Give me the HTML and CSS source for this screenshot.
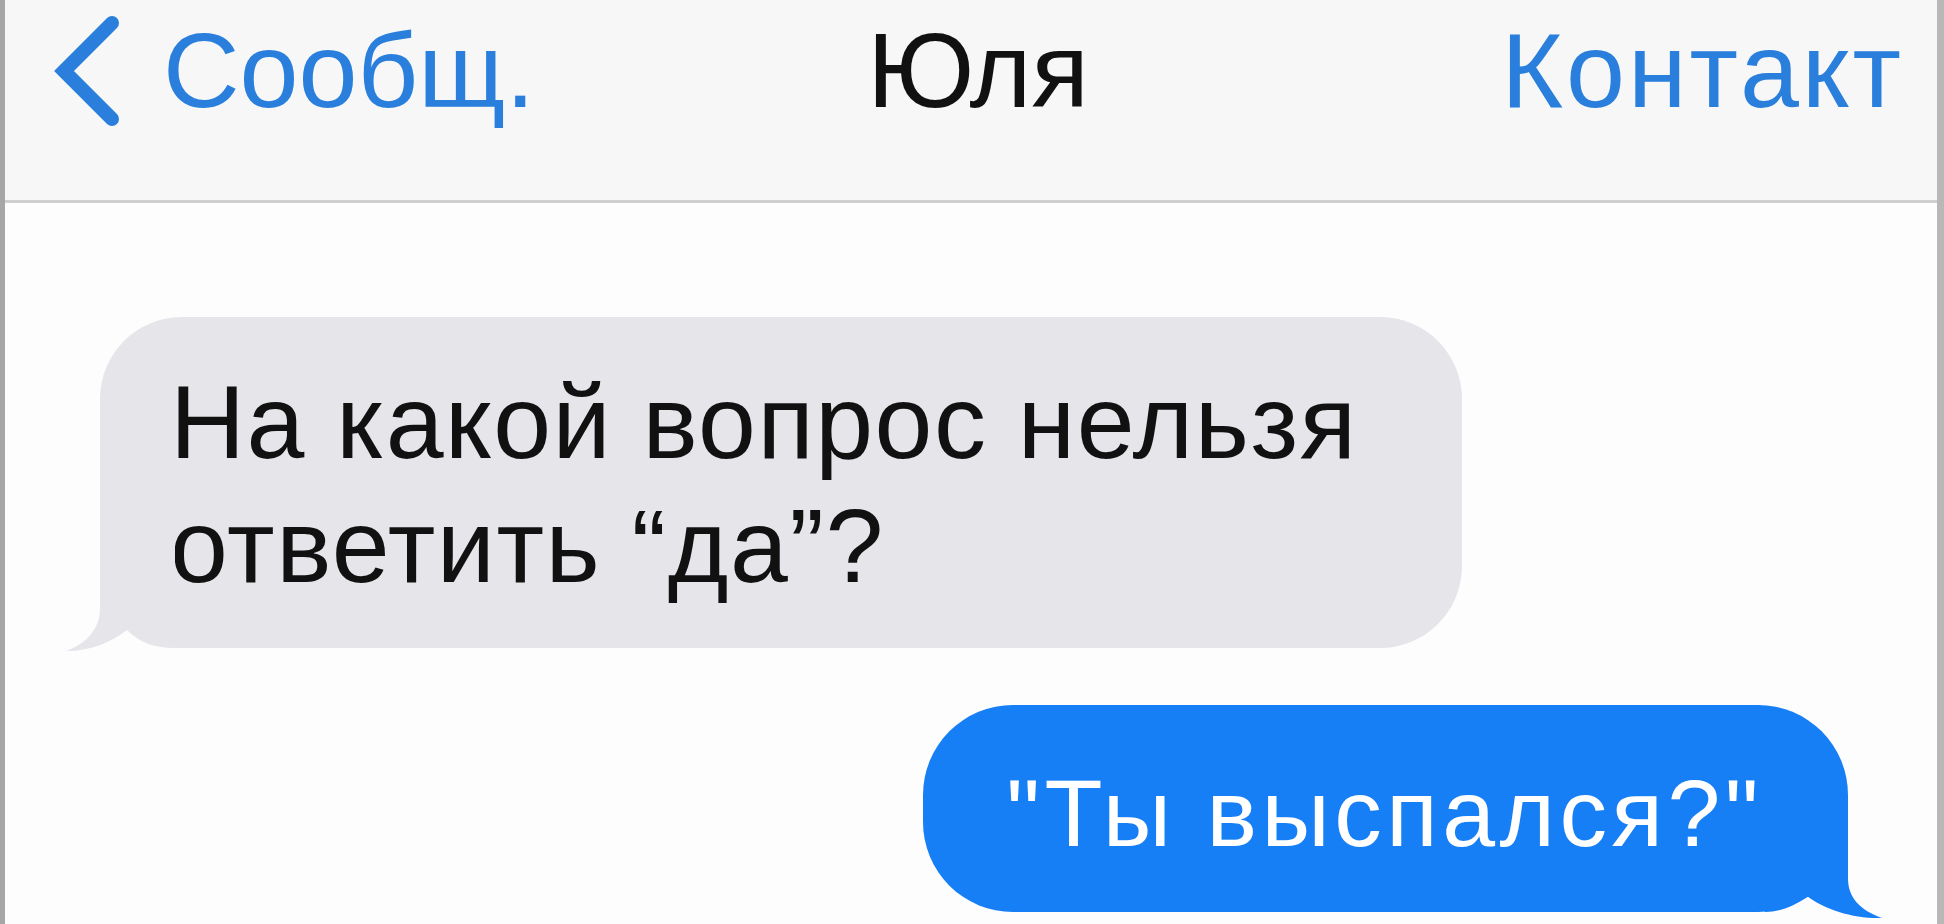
FILE: index.html
```html
<!DOCTYPE html>
<html lang="ru">
<head>
<meta charset="utf-8">
<title>Юля</title>
<link rel="stylesheet" href="styles.css">
</head>
<body>
<div class="screen">
  <header class="navbar">
    <div class="nav-left">
      <svg class="chevron" width="70" height="120" viewBox="0 0 70 120">
        <path d="M60 8 L12 56 L60 104" fill="none" stroke="currentColor" stroke-width="14" stroke-linecap="round" stroke-linejoin="miter"/>
      </svg>
      <span class="nav-back">Сообщ.</span>
    </div>
    <div class="nav-title">Юля</div>
    <div class="nav-right">Контакт</div>
  </header>
  <main class="thread">
    <div class="row row-in">
      <div class="bubble bubble-in">
        На какой вопрос нельзя<br>ответить “да”?
        <svg class="tail tail-in" width="120" height="160" viewBox="0 0 120 160">
          <path d="M40,5 L40,115 C40,135 28,150 6,158 C30,158 50,150 67,137 C80,150 95,155 115,155 L115,5 Z"/>
        </svg>
      </div>
    </div>
    <div class="row row-out">
      <div class="bubble bubble-out">
        "Ты выспался?"
        <svg class="tail tail-out" width="128" height="130" viewBox="0 0 128 130">
          <path d="M88,8 L88,88 C88,108 100,120 122,128 C95,129 65,120 47,106 C35,116 20,122 5,122 L5,8 Z"/>
        </svg>
      </div>
    </div>
  </main>
</div>
</body>
</html>
```
FILE: styles.css
```css
* { box-sizing: border-box; }
html, body { margin: 0; padding: 0; }
body {
  width: 1944px;
  height: 924px;
  overflow: hidden;
  background: #fdfdfd;
  font-family: "Liberation Sans", Arial, sans-serif;
}
.screen {
  width: 1944px;
  height: 924px;
  border-left: 5px solid #a6a6a6;
  border-right: 7px solid #b8b8b8;
  background: #fdfdfd;
  display: flex;
  flex-direction: column;
  overflow: hidden;
}
.navbar {
  height: 203px;
  flex: none;
  background: #f7f7f7;
  border-bottom: 3px solid #cfcfcf;
  display: grid;
  grid-template-columns: 1fr auto 1fr;
  align-items: start;
  padding: 17px 33px 0 47px;
  font-size: 106px;
  line-height: 106px;
}
.nav-left {
  display: flex;
  align-items: flex-start;
  color: #2a7fdc;
}
.chevron {
  margin-top: -2px;
  margin-right: 41px;
  flex: none;
}
.nav-back { color: #2a7fdc; }
.nav-title {
  color: #111;
  justify-self: center;
}
.nav-right {
  color: #2a7fdc;
  justify-self: end;
  letter-spacing: 3px;
}
.thread {
  flex: 1;
  padding-top: 114px;
  display: flex;
  flex-direction: column;
}
.row { display: flex; }
.row-in { padding-left: 95px; }
.row-out { justify-content: flex-end; padding-right: 89px; margin-top: 57px; }
.bubble {
  position: relative;
}
.bubble-in {
  background: #e5e5ea;
  color: #111;
  font-size: 104px;
  line-height: 124px;
  letter-spacing: 1.5px;
  border-radius: 82px;
  padding: 43px 105px 40px 70px;
}
.bubble-out {
  background: #167ff6;
  color: #fff;
  font-size: 95px;
  line-height: 114px;
  letter-spacing: 4.5px;
  border-radius: 90px;
  padding: 51px 85px 42px 83px;
}
.tail {
  position: absolute;
}
.tail-in { left: -40px; bottom: -5px; fill: #e5e5ea; }
.tail-out { right: -40px; bottom: -8px; fill: #167ff6; }
```
